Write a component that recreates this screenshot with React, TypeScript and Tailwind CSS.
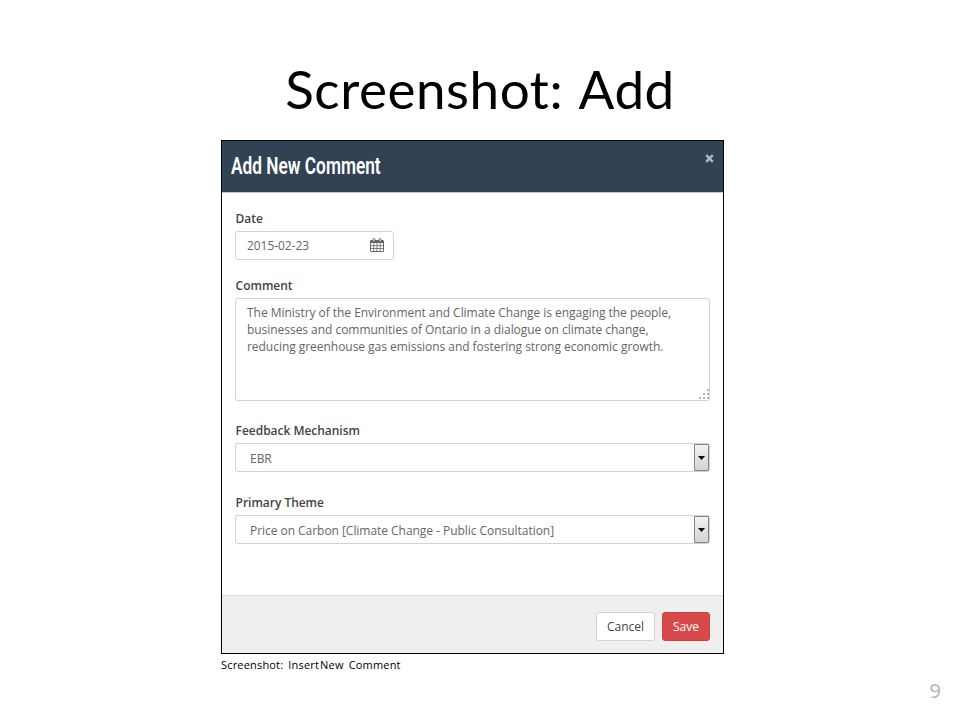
import type { ReactNode } from 'react';

function CalendarIcon() {
  return (
    <svg className="-translate-y-px" width="14" height="14" viewBox="0 0 14 14" fill="none" stroke="#666" aria-hidden="true">
      <rect x="0.5" y="2.5" width="13" height="11" rx="0.5" />
      <path d="M1 4h12" strokeWidth="2" />
      <path d="M1 7.7h12M1 10.5h12M3.8 5v8.5M7 5v8.5M10.2 5v8.5" strokeWidth="0.8" />
      <rect x="2.9" y="0.5" width="2" height="3" rx="0.8" fill="#eee" strokeWidth="0.9" />
      <rect x="9.1" y="0.5" width="2" height="3" rx="0.8" fill="#eee" strokeWidth="0.9" />
    </svg>
  );
}

function ResizeGrip() {
  return (
    <svg className="absolute right-0 bottom-0" width="11" height="11" viewBox="0 0 11 11" fill="#b5b5b5" aria-hidden="true">
      <path d="M9 0h2v2h-2zM9 4h2v2h-2zM5 4h2v2h-2zM9 8h2v2h-2zM5 8h2v2h-2zM1 8h2v2h-2z" />
    </svg>
  );
}

function Label({ children }: { children: ReactNode }) {
  return <div className="h-[17px] pl-[0.6px] text-[12px] leading-[17px] font-semibold tracking-[-0.03px] whitespace-nowrap text-[#444]">{children}</div>;
}

function SelectBox({ value }: { value: string }) {
  return (
    <div className="mt-[4px] flex h-[29px] w-[475px] justify-between rounded-[3px] border border-[#d2d2d2] pl-[14px]">
      <span className="text-[12px] leading-[29px] tracking-[-0.04px] whitespace-nowrap text-[#666]">{value}</span>
      <span className="flex h-[27px] w-[15px] items-center justify-center rounded-r-[1px] border border-[#858585] bg-linear-to-b from-[#f2f2f2] to-[#d4d4d4]">
        <svg width="7" height="4" viewBox="0 0 7 4" aria-hidden="true">
          <path d="M0 0h7L3.5 4z" fill="#000" />
        </svg>
      </span>
    </div>
  );
}

export default function App() {
  return (
    <main className="flex h-[720px] w-[960px] flex-col overflow-hidden bg-white font-['Open_Sans',sans-serif]">
      <h1 className="mt-[49px] flex h-[80px] justify-center font-['Lato',sans-serif] text-[53px] leading-[80px] tracking-[0.55px] [word-spacing:3px] whitespace-nowrap text-black">
        <span>Screenshot: Add</span>
      </h1>

      <section className="mt-[11px] ml-[221px] flex h-[514px] w-[503px] flex-col border border-black bg-white">
        <header className="flex h-[52px] shrink-0 justify-between border-b border-[#c5cad0] bg-[#304254] pr-[9px] pl-[9px]">
          <h2 className="origin-left scale-x-[0.735] font-['Roboto',sans-serif] text-[23.5px] leading-[50px] font-semibold whitespace-nowrap text-white">Add New Comment</h2>
          <svg className="mt-[13px]" width="9" height="9" viewBox="0 0 9 9" stroke="#a3b9d3" strokeWidth="2.4" aria-hidden="true">
            <path d="M1.2 1.2l6.6 6.6M7.8 1.2l-6.6 6.6" />
          </svg>
        </header>

        <div className="flex grow flex-col pl-[13px]">
          <div className="mt-[17px]"><Label>Date</Label></div>
          <div className="mt-[4px] flex h-[29px] w-[159px] items-center justify-between rounded-[3px] border border-[#d2d2d2] pr-[9px] pl-[11px] text-[12px] tracking-[-0.06px] text-[#666]">
            <span>2015-02-23</span>
            <CalendarIcon />
          </div>
          <div className="mt-[17px]"><Label>Comment</Label></div>
          <div className="relative mt-[4px] h-[103px] w-[475px] rounded-[3px] border border-[#d2d2d2] pt-[5px] pl-[11px] text-[12px] leading-[17px] tracking-[-0.04px] whitespace-nowrap text-[#666]">
            <p>The Ministry of the Environment and Climate Change is engaging the people,</p>
            <p>businesses and communities of Ontario in a dialogue on climate change,</p>
            <p>reducing greenhouse gas emissions and fostering strong economic growth.</p>
            <ResizeGrip />
          </div>
          <div className="mt-[21px]"><Label>Feedback Mechanism</Label><SelectBox value="EBR" /></div>
          <div className="mt-[22px]"><Label>Primary Theme</Label><SelectBox value="Price on Carbon [Climate Change - Public Consultation]" /></div>
        </div>

        <footer className="flex h-[58px] shrink-0 justify-end gap-[7px] border-t border-[#ddd] bg-[#efefef] pt-[16px] pr-[13px] text-[12px]">
          <button className="h-[29px] w-[59px] rounded-[3px] border border-[#d2d2d2] bg-white text-[#444]">Cancel</button>
          <button className="h-[29px] w-[48px] rounded-[3px] border border-[#c94343] bg-[#d9494b] text-white">Save</button>
        </footer>
      </section>

      <div className="ml-[221px] h-[22px] text-[11px] leading-[22px] tracking-[0.18px] whitespace-nowrap text-black">
        <span>Screenshot: </span>
        <span className="ml-[2px]">Insert</span>
        <span className="ml-[1px]">New </span>
        <span className="ml-[2px]">Comment</span>
      </div>
      <div className="mt-[3px] mr-[19px] h-[24px] text-right text-[20px] leading-[24px] text-[#b2b2b2]">9</div>
    </main>
  );
}
